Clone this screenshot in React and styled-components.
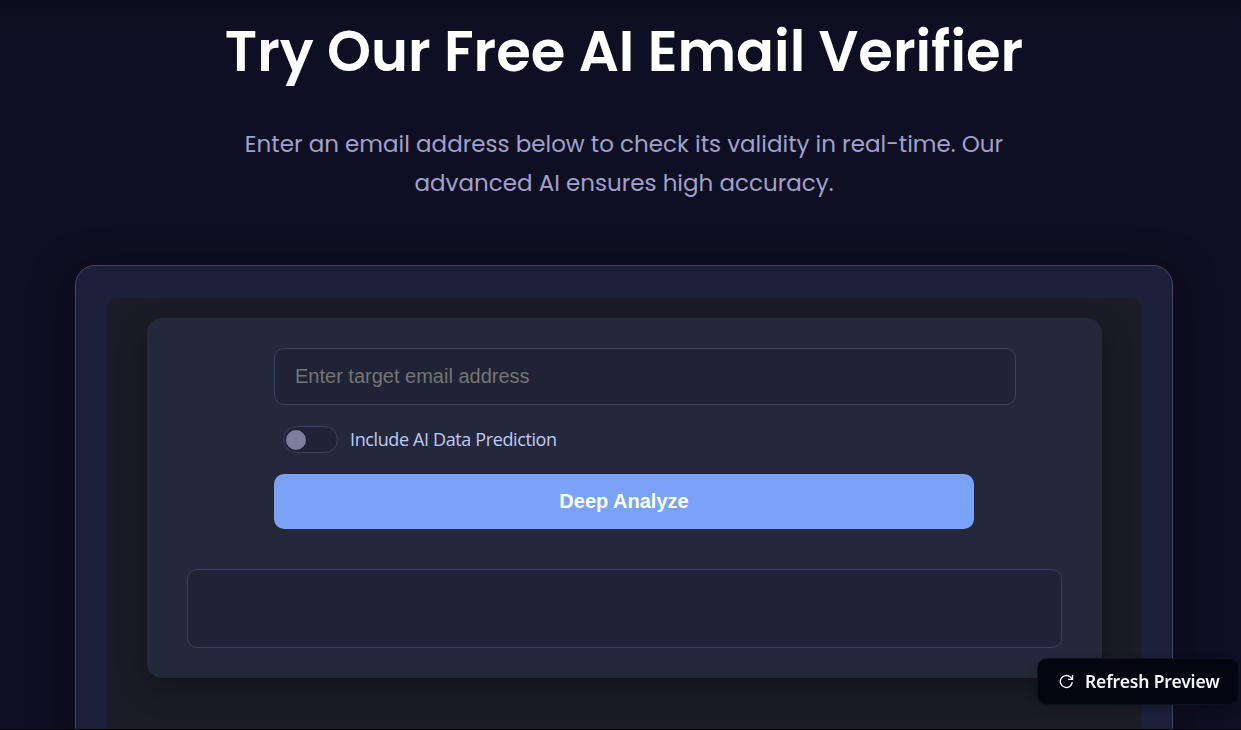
import React from 'react';
import styled, { createGlobalStyle } from 'styled-components';

const GlobalStyle = createGlobalStyle`
  *, *::before, *::after { box-sizing: border-box; }
  html, body { margin: 0; height: 100%; overflow: hidden; background: #000; }
  body { font-family: Poppins, Inter, "Liberation Sans", sans-serif; }
`;

const Section = styled.section`
  height: 729px;
  overflow: hidden;
  padding: 10px 68px 0 75px;
  display: flex;
  flex-direction: column;
  align-items: center;
  background: linear-gradient(#0d0c1b 0, #0e0f22 22px, #0e0f22 100%);
`;

const Title = styled.h1`
  margin: 0;
  height: 84px;
  line-height: 84px;
  font-size: 56px;
  font-weight: 600;
  white-space: nowrap;
  color: #fff;
`;

const Lead = styled.p`
  margin: 31px 0 0;
  display: flex;
  flex-direction: column;
  align-items: center;
  font-size: 23px;
  line-height: 39px;
  white-space: nowrap;
  color: #a1a1cb;
`;

const Frame = styled.div`
  flex: none;
  align-self: stretch;
  height: 560px;
  margin-top: 62px;
  padding: 32px 31px;
  border: 1px solid #45455f;
  border-radius: 20px;
  background: #1c2039;
  box-shadow: 0 10px 40px rgba(13, 8, 20, 0.5);
`;

const Embed = styled.div`
  height: 500px;
  padding: 20px 39px 0 40px;
  border-radius: 12px;
  background: #1c1c26;
  overflow: hidden;
`;

const Card = styled.div`
  height: 360px;
  padding: 30px 40px;
  border-radius: 15px;
  background: #24283b;
  box-shadow: 0 10px 30px rgba(0, 0, 0, 0.3);
`;

const Form = styled.form`
  width: 742px;
  margin-left: 87px;
  display: flex;
  flex-direction: column;
`;

const EmailInput = styled.input`
  width: 742px;
  height: 57px;
  padding: 0 20px;
  border: 1px solid #3b4261;
  border-radius: 10px;
  background: #202336;
  color: #c0caf5;
  font: 20px "Liberation Sans", Arial, sans-serif;
  outline: none;
  &::placeholder { color: #757575; opacity: 1; }
`;

const ToggleRow = styled.label`
  display: flex;
  align-items: center;
  height: 27px;
  margin: 21px 0 21px 9px;
  gap: 12px;
`;

const Switch = styled.span`
  width: 55px;
  height: 27px;
  padding: 0 2px;
  display: flex;
  align-items: center;
  border: 1px solid #3b4261;
  border-radius: 14px;
  background: #202336;
`;

const Knob = styled.span`
  width: 20px;
  height: 20px;
  border-radius: 50%;
  background: #7e7f9e;
`;

const ToggleLabel = styled.span`
  font: 18px/27px "Segoe UI", "Open Sans", sans-serif;
  letter-spacing: -0.38px;
  white-space: nowrap;
  color: #c0caf5;
`;

const AnalyzeButton = styled.button`
  width: 700px;
  height: 55px;
  padding: 0;
  border: 0;
  border-radius: 10px;
  background: #7aa2f7;
  color: #fff;
  font: bold 20px "Liberation Sans", Arial, sans-serif;
`;

const Result = styled.div`
  height: 79px;
  margin-top: 40px;
  border: 1px solid #3b4060;
  border-radius: 10px;
  background: #202336;
`;

const RefreshButton = styled.button`
  position: fixed;
  right: 2px;
  bottom: 25px;
  width: 202px;
  height: 47px;
  padding: 0 0 0 21px;
  display: flex;
  align-items: center;
  gap: 11px;
  border: 1px solid #0b1220;
  border-radius: 10px;
  background: #020611;
  color: #f3f5f7;
  font: 600 17.5px "Noto Sans", sans-serif;
  letter-spacing: -0.14px;
  white-space: nowrap;
  box-shadow: 0 4px 10px rgba(0, 0, 0, 0.18);
`;

const RefreshText = styled.span`
  padding-bottom: 2px;
`;

const RefreshIcon = () => (
  <svg
    width="15"
    height="15"
    viewBox="0 0 15 15"
    fill="none"
    stroke="currentColor"
    strokeWidth="1.4"
  >
    <path d="M13.3 8.2A6 6 0 1 1 11.4 3.1L13.4 5.2" />
    <path d="M13.5 1V5.4H9.2" />
  </svg>
);

export default function App() {
  return (
    <>
      <GlobalStyle />
      <Section>
        <Title>Try Our Free AI Email Verifier</Title>
        <Lead>
          <span>Enter an email address below to check its validity in real-time. Our</span>
          <span>advanced AI ensures high accuracy.</span>
        </Lead>
        <Frame>
          <Embed>
            <Card>
              <Form onSubmit={(e) => e.preventDefault()}>
                <EmailInput type="email" placeholder="Enter target email address" />
                <ToggleRow>
                  <Switch>
                    <Knob />
                  </Switch>
                  <ToggleLabel>Include AI Data Prediction</ToggleLabel>
                </ToggleRow>
                <AnalyzeButton type="submit">Deep Analyze</AnalyzeButton>
              </Form>
              <Result />
            </Card>
          </Embed>
        </Frame>
      </Section>
      <RefreshButton type="button">
        <RefreshIcon />
        <RefreshText>Refresh Preview</RefreshText>
      </RefreshButton>
    </>
  );
}
